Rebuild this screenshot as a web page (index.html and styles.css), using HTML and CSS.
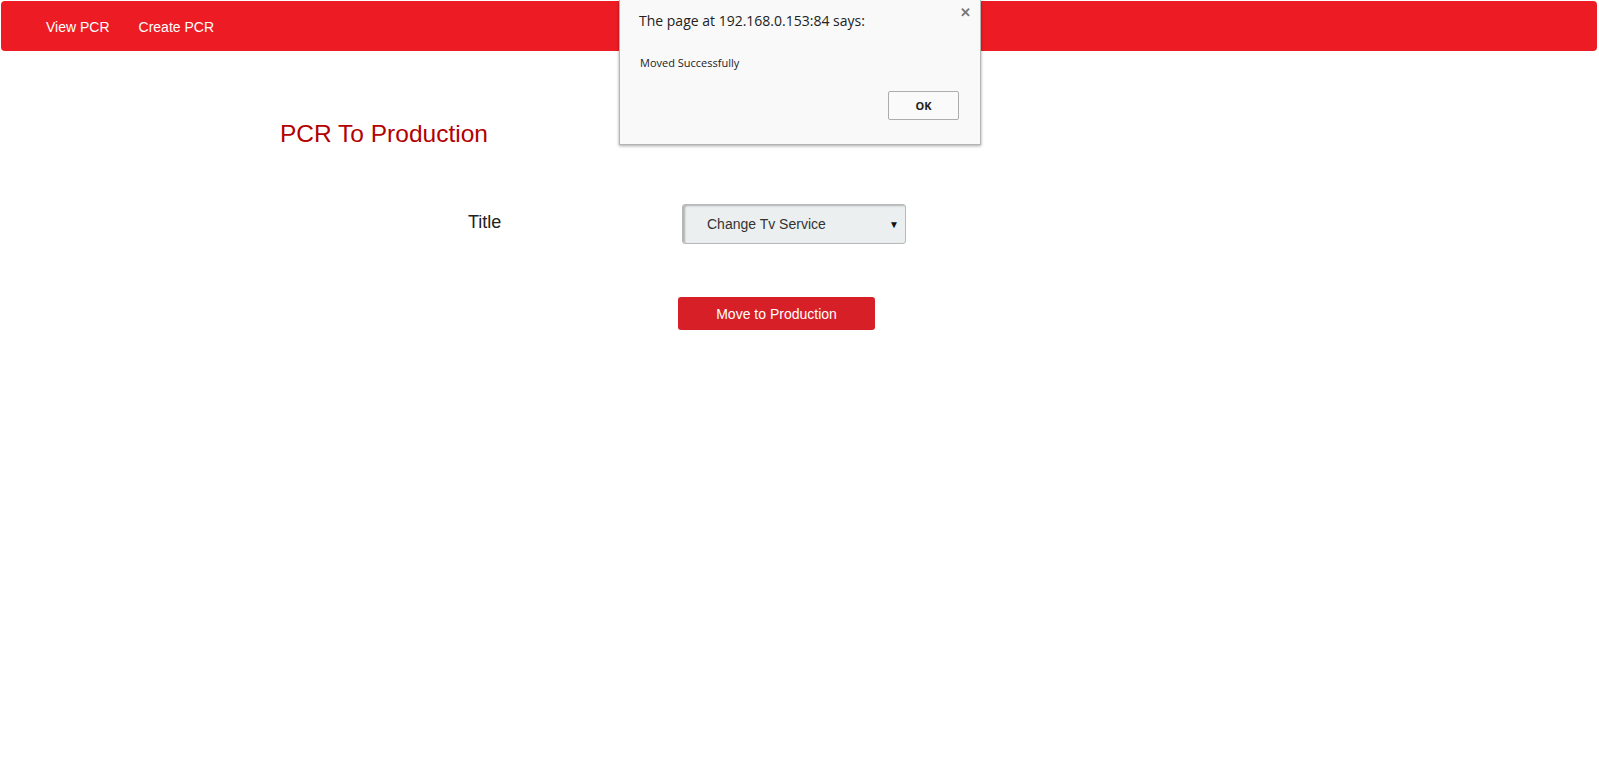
FILE: index.html
```html
<!DOCTYPE html>
<html>
<head>
<meta charset="utf-8">
<link rel="stylesheet" href="styles.css">
</head>
<body>
<nav class="navbar">
  <a class="nav-link" href="#">View PCR</a>
  <a class="nav-link" href="#">Create PCR</a>
</nav>
<main class="page">
  <h2 class="page-title">PCR To Production</h2>
  <form class="form">
    <div class="form-row">
      <label class="form-label">Title</label>
      <div class="select">
        <span class="select-text">Change Tv Service</span>
        <span class="select-arrow">&#9660;</span>
      </div>
    </div>
    <div class="btn-row">
      <button type="button" class="btn-primary">Move to Production</button>
    </div>
  </form>
</main>
<div class="dialog">
  <span class="dialog-close">&#10005;</span>
  <div class="dialog-title">The page at 192.168.0.153:84 says:</div>
  <div class="dialog-msg">Moved Successfully</div>
  <div class="dialog-actions">
    <button type="button" class="dialog-ok">OK</button>
  </div>
</div>
</body>
</html>
```

FILE: styles.css
```css
html, body {
  margin: 0;
  padding: 0;
  background: #fff;
  font-family: "Liberation Sans", Arial, sans-serif;
  color: #333;
}
body {
  padding: 1px 2px 0 1px;
}
.navbar {
  height: 50px;
  background: #ed1c24;
  border-radius: 4px;
  display: flex;
  align-items: center;
  padding-left: 45px;
  gap: 29px;
}
.nav-link {
  color: #fff;
  text-decoration: none;
  font-size: 14px;
  line-height: 20px;
  padding-top: 1px;
}
.page {
  padding-top: 70px;
}
.page-title {
  margin: 0;
  padding-left: 279px;
  font-size: 24.5px;
  line-height: 26px;
  font-weight: normal;
  color: #b30000;
}
.form {
  margin-top: 57px;
}
.form-row {
  display: flex;
  align-items: center;
  padding-left: 467px;
}
.form-label {
  width: 214px;
  font-size: 18px;
  line-height: 20px;
  padding-bottom: 4px;
  color: #222;
}
.select {
  box-sizing: border-box;
  width: 224px;
  height: 40px;
  background: #ecefef;
  border: 1px solid #b8b8b8;
  border-radius: 3px;
  box-shadow: inset 2px 1px 2px rgba(0,0,0,0.25);
  display: flex;
  align-items: center;
  justify-content: space-between;
  padding: 0 6px 0 24px;
}
.select-text {
  font-size: 14px;
  color: #333;
}
.select-arrow {
  font-size: 10px;
  color: #111;
}
.btn-row {
  margin-top: 53px;
  padding-left: 677px;
}
.btn-primary {
  width: 197px;
  height: 33px;
  border: none;
  border-radius: 3px;
  background: #d71f27;
  color: #fff;
  font-family: "Liberation Sans", Arial, sans-serif;
  font-size: 14px;
  padding: 0;
}
.dialog {
  position: absolute;
  left: 619px;
  top: 0;
  width: 362px;
  height: 145px;
  box-sizing: border-box;
  background: #f9f9f9;
  border: 1px solid #b4b4b4;
  border-top: none;
  box-shadow: 0 1px 3px rgba(0,0,0,0.35);
  font-family: "Open Sans", "Segoe UI", sans-serif;
}
.dialog-close {
  position: absolute;
  right: 9px;
  top: 3px;
  font-size: 13px;
  font-weight: bold;
  color: #777;
}
.dialog-title {
  padding: 11px 0 0 19px;
  font-size: 14px;
  line-height: 20px;
  color: #222;
}
.dialog-msg {
  padding: 24px 0 0 20px;
  font-size: 11px;
  line-height: 16px;
  color: #222;
}
.dialog-actions {
  display: flex;
  justify-content: flex-end;
  padding: 20px 21px 0 0;
}
.dialog-ok {
  width: 71px;
  height: 29px;
  border: 1px solid #acacac;
  border-radius: 2px;
  background: #fafafa;
  font-family: "Open Sans", "Segoe UI", sans-serif;
  font-size: 11px;
  font-weight: bold;
  color: #222;
  padding: 0;
}
```
